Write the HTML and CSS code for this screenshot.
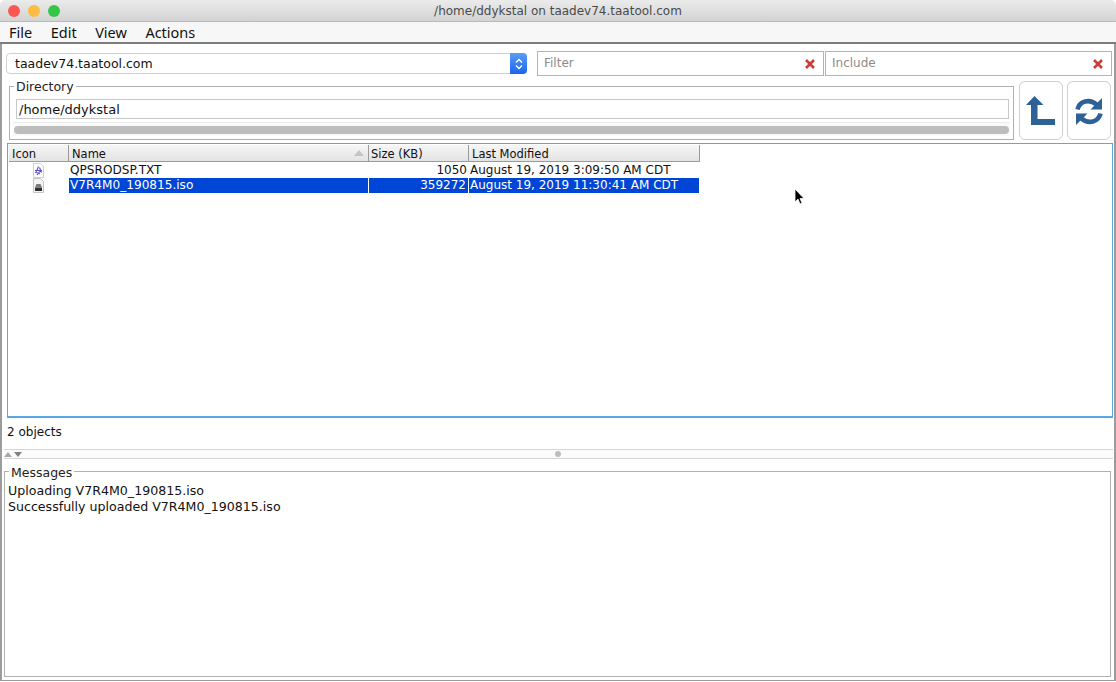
FILE: index.html
```html
<!DOCTYPE html>
<html lang="en">
<head>
<meta charset="utf-8">
<title>/home/ddykstal on taadev74.taatool.com</title>
<link rel="stylesheet" href="styles.css">
</head>
<body>
<div class="window">
  <header class="titlebar">
    <div class="lights"><span class="light red"></span><span class="light yellow"></span><span class="light green"></span></div>
    <div class="title">/home/ddykstal on taadev74.taatool.com</div>
  </header>
  <nav class="menubar"><span>File</span><span>Edit</span><span>View</span><span>Actions</span></nav>
  <main class="content">
    <div class="toprow">
      <div class="combo">
        <span class="combo-text">taadev74.taatool.com</span>
        <span class="stepper"><svg width="10" height="16" viewBox="0 0 10 16"><path d="M2 6.500 5 3.500 8 6.500M2 9.500 5 12.500 8 9.500" fill="none" stroke="#fff" stroke-width="1.400"/></svg></span>
      </div>
      <div class="filters">
        <div class="search"><span>Filter</span><svg class="clear" width="12" height="12" viewBox="0 0 12 12"><path d="M2 2 10 10M10 2 2 10" stroke="#cc3b36" stroke-width="2.600"/></svg></div>
        <div class="search"><span>Include</span><svg class="clear" width="12" height="12" viewBox="0 0 12 12"><path d="M2 2 10 10M10 2 2 10" stroke="#cc3b36" stroke-width="2.600"/></svg></div>
      </div>
    </div>
    <div class="dirrow">
      <fieldset class="dirbox">
        <legend>Directory</legend>
        <div class="dirinput">/home/ddykstal</div>
        <div class="scrolltrack"><div class="scrollthumb"></div></div>
      </fieldset>
      <button class="toolbtn" type="button" aria-label="Up">
        <svg width="30" height="30" viewBox="0 0 30 30"><path d="M8.500 0 17.500 9H11.500V23H29V29H5V9H0Z" fill="#2d6197"/></svg>
      </button>
      <button class="toolbtn" type="button" aria-label="Refresh">
        <svg width="30" height="30" viewBox="0 0 30 30"><g id="arc"><path d="M3.500 13.500C5.500 5 15.500 2.500 22.500 8.500" fill="none" stroke="#2d6197" stroke-width="4.600"/><path d="M28 2V13.500H16.500Z" fill="#2d6197"/></g><use href="#arc" transform="rotate(180 15 15.500)"/></svg>
      </button>
    </div>
    <section class="tablebox">
      <div class="thead">
        <div class="th c-icon">Icon</div>
        <div class="th c-name">Name<svg class="sort" width="10" height="6" viewBox="0 0 10 6"><path d="M5 0 10 6H0Z" fill="#c4c4c4"/></svg></div>
        <div class="th c-size">Size (KB)</div>
        <div class="th c-date">Last Modified</div>
      </div>
      <div class="tr">
        <div class="td c-icon"><svg width="13" height="15" viewBox="0 0 13 15"><path d="M1.500.5H8.500L11.500 3.500V14.500H1.500Z" fill="#fdfdfd" stroke="#cfcfcf"/><path d="M6.500 3.500 5 7 3.500 10M7.500 4.500 9.500 9.500M3 7.500H10M5 12 9 7M4.500 9.500 8 11" stroke="#5a4fd0" stroke-width="1.100" fill="none"/></svg></div>
        <div class="td c-name">QPSRODSP.TXT</div>
        <div class="td c-size num">1050</div>
        <div class="td c-date">August 19, 2019 3:09:50 AM CDT</div>
      </div>
      <div class="tr selected">
        <div class="td c-icon"><svg width="13" height="15" viewBox="0 0 13 15"><path d="M1.500.5H8.500L11.500 3.500V14.500H1.500Z" fill="#f4f4f4" stroke="#c4c4c4"/><path d="M3 9.500H10V13H3Z" fill="#2e2e2e"/><path d="M4.500 6H8.500L10 9.500H3Z" fill="#7a7a7a"/></svg></div>
        <div class="td c-name">V7R4M0_190815.iso</div>
        <div class="td c-size num">359272</div>
        <div class="td c-date">August 19, 2019 11:30:41 AM CDT</div>
      </div>
    </section>
    <div class="status">2 objects</div>
    <div class="divider">
      <span class="arrows">
        <svg width="8" height="5" viewBox="0 0 8 5"><path d="M4 0 8 5H0Z" fill="#a8a8a8"/></svg>
        <svg width="8" height="5" viewBox="0 0 8 5"><path d="M0 0H8L4 5Z" fill="#808080"/></svg>
      </span>
      <span class="grip"></span>
    </div>
    <fieldset class="messages">
      <legend>Messages</legend>
      <div>Uploading V7R4M0_190815.iso</div>
      <div>Successfully uploaded V7R4M0_190815.iso</div>
    </fieldset>
  </main>
  <svg class="cursor" width="12" height="18" viewBox="0 0 12 18"><path d="M1 1V14L4 11 6 16 8 15 6 10.500H10Z" fill="#000" stroke="#fff" stroke-width=".8"/></svg>
</div>
</body>
</html>
```
FILE: styles.css
```css
* { box-sizing: border-box; }
html, body { margin: 0; height: 100%; background: #fff; overflow: hidden; }
body { font-family: "DejaVu Sans", "Liberation Sans", sans-serif; font-size: 12px; color: #111; }
.window { position: relative; width: 1116px; height: 682px; display: flex; flex-direction: column; overflow: hidden; }
.titlebar { height: 22px; flex: none; display: flex; align-items: center; background: linear-gradient(#ebebeb, #d3d3d3); border-bottom: 1px solid #b9b9b9; border-radius: 5px 5px 0 0; position: relative; }
.lights { display: flex; gap: 8px; padding-left: 8px; }
.light { width: 12px; height: 12px; border-radius: 50%; }
.red { background: #fc5753; }
.yellow { background: #fdbc40; }
.green { background: #33c748; }
.title { position: absolute; left: 0; right: 0; text-align: center; font-size: 12px; color: #4a4a4a; }
.menubar { height: 22px; flex: none; display: flex; align-items: center; gap: 18.500px; padding-left: 9px; background: #f7f7f7; border-bottom: 2px solid #7d7d7d; font-size: 14.500px; font-family: "Noto Sans", sans-serif; color: #111; }
.content { flex: 1; min-height: 0; display: flex; flex-direction: column; border-left: 2px solid #9c9c9c; border-right: 2px solid #9c9c9c; border-bottom: 1px solid #9c9c9c; margin-bottom: 1px; padding: 7px 1px 1px 2px; background: #fff; }
.toprow { display: flex; height: 25px; flex: none; align-items: center; padding-left: 2px; }
.combo { width: 521px; height: 21px; display: flex; align-items: center; justify-content: space-between; border: 1px solid #d0d0d0; border-radius: 4px; background: #fff; padding-left: 8px; }
.combo-text { font-size: 12.500px; }
.stepper { width: 17px; height: 21px; margin: -1px -1px -1px 0; display: flex; align-items: center; justify-content: center; border-radius: 0 4px 4px 0; background: linear-gradient(#5a9cf8, #1a66ee); }
.filters { display: flex; gap: 1px; margin-left: 10px; }
.search { width: 287px; height: 25px; display: flex; align-items: center; justify-content: space-between; padding: 0 7px 2px 6px; border: 1px solid #b4b4b4; background: #fff; color: #8c8c8c; }
.clear { margin-top: 3px; }
.dirrow { display: flex; height: 59px; flex: none; margin-top: 5px; padding-left: 5px; }
.dirbox { width: 1005px; height: 59px; margin: 0; padding: 0 5px 0 6px; border: 1px solid #b0b0b0; }
.dirbox legend { padding: 0 2px; margin-left: -2px; font-size: 12.500px; line-height: 10px; color: #222; transform: translateY(1px); }
.messages legend { padding: 0 2px; margin-left: 1px; font-size: 12.500px; line-height: 13px; color: #222; transform: translateY(1px); }
.dirinput { height: 20px; border: 1px solid #c8c8c8; line-height: 19px; padding-left: 2px; font-size: 13px; margin-top: 8px; margin-right: -1px; }
.scrolltrack { margin-top: 3px; margin-left: -3px; margin-right: -2px; height: 14px; padding: 3px 1px 0 0; border-top: 1px solid #ececec; background: #fafafa; }
.scrollthumb { height: 8px; border-radius: 4px; background: #bdbdbd; margin-left: 1px; }
.toolbtn { width: 44px; height: 59px; flex: none; margin: 0 0 0 5px; padding: 0; display: flex; align-items: center; justify-content: center; background: #fff; border: 1px solid #cfcfcf; border-radius: 6px; }
.toolbtn + .toolbtn { margin-left: 4px; }
.tablebox { height: 275px; flex: none; margin: 3px 0 0 3px; width: 1106px; border: 1px solid #5aa7e6; border-bottom-width: 2px; padding: 1px 0 0 1px; }
.thead { display: flex; height: 17px; width: 691px; }
.th { height: 17px; line-height: 18px; padding-left: 3px; font-size: 11.500px; border-right: 1px solid #9a9a9a; border-bottom: 1px solid #9a9a9a; background: linear-gradient(#f6f6f6, #e3e3e3); position: relative; white-space: nowrap; }
.c-icon { width: 60px; flex: none; }
.c-name { width: 300px; flex: none; }
.c-size { width: 100px; flex: none; padding-left: 2px; }
.c-date { width: 231px; flex: none; }
.sort { position: absolute; right: 4px; top: 5px; }
.tr { display: flex; height: 16px; width: 690px; line-height: 16px; }
.tr.selected { height: 15px; line-height: 15px; }
.td { padding: 0 1px; white-space: nowrap; overflow: hidden; }
.td.c-name { font-size: 12.100px; }
.td.c-date { width: 230px; }
.td.c-icon { display: flex; justify-content: center; align-items: center; padding-left: 0; background: #fff; }
.num { text-align: right; padding-right: 2px; }
.selected .c-name, .selected .c-size, .selected .c-date { background: #0046d6; color: #fff; border-right: 1px solid #fff; }
.selected .c-date { border-right: 0; }
.status { height: 31px; flex: none; line-height: 28px; padding-left: 3px; }
.divider { height: 10px; flex: none; display: flex; align-items: center; border-top: 1px solid #d4d4d4; border-bottom: 1px solid #d4d4d4; background: #fbfbfb; position: relative; }
.arrows { display: flex; gap: 2px; padding-left: 0; }
.grip { width: 6px; height: 6px; border-radius: 50%; background: #bdbdbd; position: absolute; left: 551px; top: 1px; }
.messages { flex: 1; min-height: 0; margin: 6px 2px 2px 0; padding: 5px 3px 0 3px; border: 1px solid #b0b0b0; font-size: 12.600px; line-height: 16px; }
.cursor { position: absolute; left: 794px; top: 188px; }
```
